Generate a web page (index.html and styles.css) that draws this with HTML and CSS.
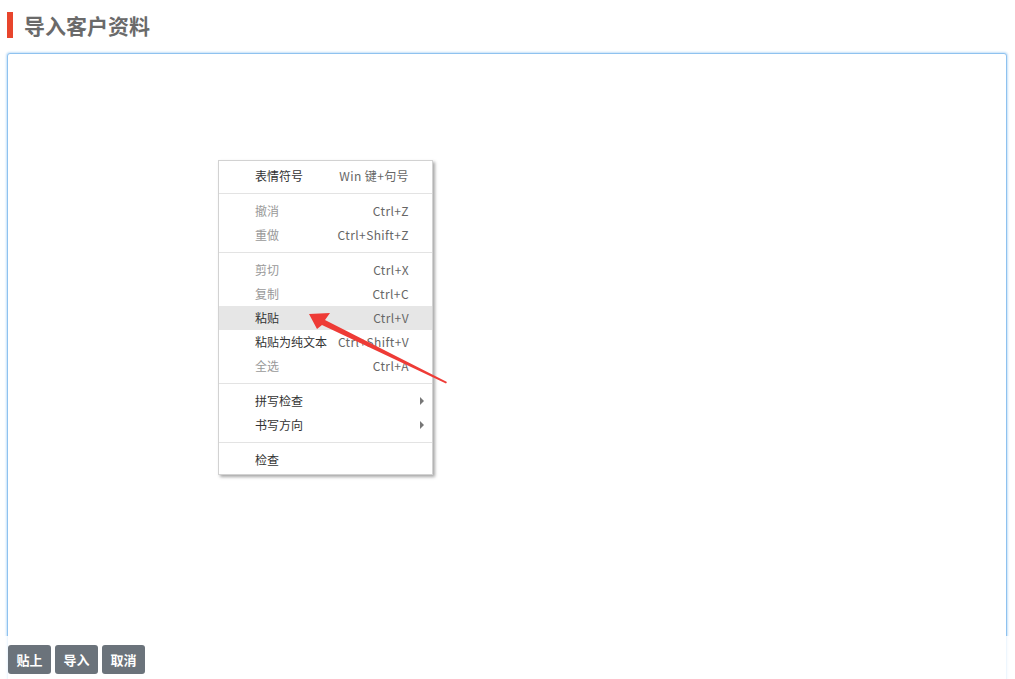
FILE: index.html
```html
<!DOCTYPE html>
<html>
<head>
  <meta charset="utf-8">
  <title>导入客户资料</title>
  <link rel="stylesheet" href="styles.css">
</head>
<body>
  <div class="page">
    <h2 class="title">导入客户资料</h2>

    <div class="editor"></div>

    <!-- 右键菜单 -->
    <ul class="ctx-menu">
      <li class="item"><span>表情符号</span><span class="key">Win 键+句号</span></li>
      <li class="sep"></li>
      <li class="item off"><span>撤消</span><span class="key">Ctrl+Z</span></li>
      <li class="item off"><span>重做</span><span class="key">Ctrl+Shift+Z</span></li>
      <li class="sep"></li>
      <li class="item off"><span>剪切</span><span class="key">Ctrl+X</span></li>
      <li class="item off"><span>复制</span><span class="key">Ctrl+C</span></li>
      <li class="item active"><span>粘贴</span><span class="key">Ctrl+V</span></li>
      <li class="item"><span>粘贴为纯文本</span><span class="key">Ctrl+Shift+V</span></li>
      <li class="item off"><span>全选</span><span class="key">Ctrl+A</span></li>
      <li class="sep"></li>
      <li class="item sub"><span>拼写检查</span></li>
      <li class="item sub"><span>书写方向</span></li>
      <li class="sep"></li>
      <li class="item"><span>检查</span></li>
    </ul>

    <svg class="pointer" width="150" height="80" viewBox="0 0 150 80">
      <polygon points="0,1 21,0 16,7 138,69 137,70.5 13,12 8,16" fill="#ee3b36"/>
    </svg>

    <div class="actions">
      <button>贴上</button>
      <button>导入</button>
      <button>取消</button>
    </div>
  </div>
</body>
</html>
```

FILE: styles.css
```css
html, body {
  margin: 0;
  height: 100%;
  overflow: hidden;
  background: #fff;
}

body {
  font-family: "Microsoft YaHei", "Noto Sans CJK SC", "Noto Sans", sans-serif;
}

.page {
  position: relative;
  height: 100%;
  padding: 0 8px 0 7px;
}

.title {
  margin: 0;
  height: 53px;
  box-sizing: border-box;
  padding-bottom: 3px;
  display: flex;
  align-items: center;
  font-size: 21px;
  font-weight: bold;
  color: #6a6a6a;
  line-height: 26px;
}

.title::before {
  content: "";
  width: 6px;
  height: 26px;
  background: #e8452c;
  margin-right: 11px;
}

.editor {
  height: 650px;
  border: 1px solid #8fc2ef;
  border-radius: 3px;
  box-shadow: 0 0 2px 1px #c7e1f8;
  background: #fff;
}

.ctx-menu {
  position: absolute;
  left: 218px;
  top: 160px;
  width: 213px;
  margin: 0;
  padding: 3px 0 2px;
  list-style: none;
  background: #fff;
  border: 1px solid #d2d2d2;
  box-shadow: 2px 2px 3px rgba(0, 0, 0, 0.35);
  font-size: 12px;
  color: #333;
}

.ctx-menu .item {
  position: relative;
  height: 24px;
  line-height: 24px;
  padding: 0 23px 0 36px;
  display: flex;
  justify-content: space-between;
}

.ctx-menu .key {
  color: #666;
  letter-spacing: 0.4px;
}

.ctx-menu .off {
  color: #999;
}

.ctx-menu .active {
  background: #e6e6e6;
}

.ctx-menu .sub::after {
  content: "";
  position: absolute;
  right: 8px;
  top: 8px;
  border-left: 4px solid #777;
  border-top: 4px solid transparent;
  border-bottom: 4px solid transparent;
}

.ctx-menu .sep {
  height: 1px;
  background: #e3e3e3;
  margin: 5px 0;
}

.pointer {
  position: absolute;
  left: 309px;
  top: 313px;
}

.actions {
  position: absolute;
  left: 0;
  right: 0;
  bottom: 0;
  height: 43px;
  padding: 9px 8px 0;
  box-sizing: border-box;
  background: rgba(255, 255, 255, 0.85);
  display: flex;
  gap: 4px;
}

.actions button {
  height: 29px;
  padding: 0 8.5px;
  border: none;
  border-radius: 3px;
  background: #6b737b;
  color: #fff;
  font-family: inherit;
  font-size: 13px;
  font-weight: bold;
}
```
